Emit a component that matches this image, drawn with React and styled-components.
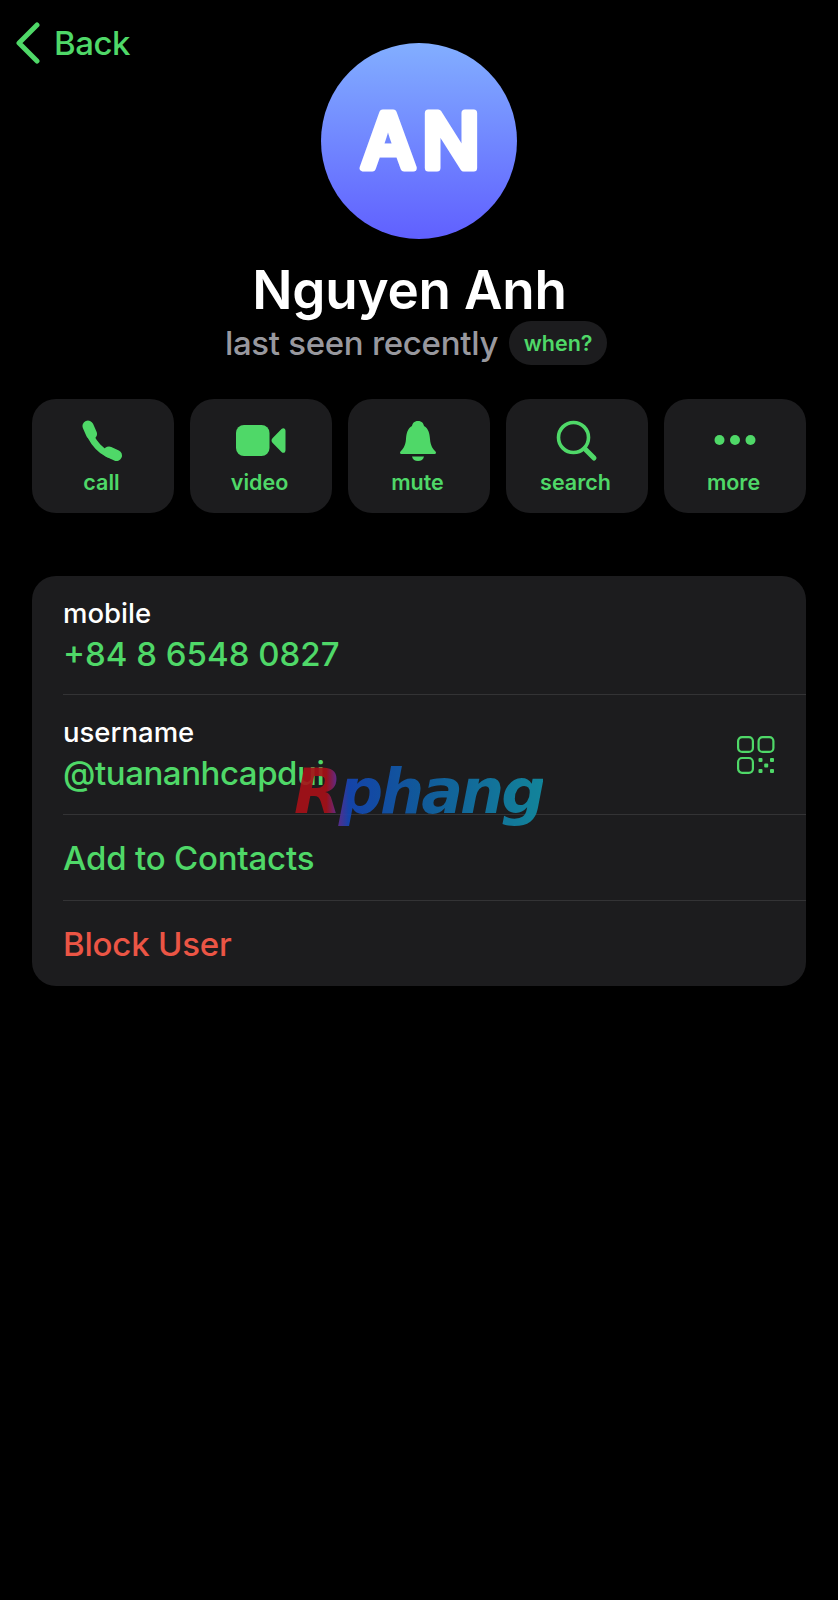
import React from 'react'
import styled, { createGlobalStyle } from 'styled-components'

const GREEN = '#4fd868'

const GlobalStyle = createGlobalStyle`
  html, body {
    margin: 0;
    background: #000;
    font-family: Inter, "Noto Sans", "Liberation Sans", sans-serif;
    -webkit-font-smoothing: antialiased;
  }
`

function PhoneIcon() {
  return (
    <svg width="44" height="44" viewBox="0 0 44 44">
      <g fill="none" stroke={GREEN} strokeLinecap="round">
        <path d="M7 8 C 9 22, 22 37, 36 37" strokeWidth="6.5" />
        <path d="M7 7 L 10.5 15" strokeWidth="11" />
        <path d="M28 33 L 35.5 36.5" strokeWidth="11" />
      </g>
    </svg>
  )
}

function VideoIcon() {
  return (
    <svg width="50" height="44" viewBox="0 0 50 44">
      <rect x="0" y="6" width="33.5" height="31" rx="8" fill={GREEN} />
      <path d="M35.5 21.5 C35.5 20.6 35.9 19.8 36.7 19 L45.5 10 C47.3 8.3 49.5 9.3 49.5 11.8 V31.2 C49.5 33.7 47.3 34.7 45.5 33 L36.7 24 C35.9 23.2 35.5 22.4 35.5 21.5 Z" fill={GREEN} />
    </svg>
  )
}

function BellIcon() {
  return (
    <svg width="44" height="44" viewBox="0 0 44 44">
      <path fill={GREEN} d="M21 2 C17 2 15.5 4.5 15 7 C10.5 9.5 9.5 14 9 20 C8.5 27 6 30 3.5 32.5 C2.5 33.8 3 35 4.5 35 H37.5 C39 35 39.5 33.8 38.5 32.5 C36 30 33.5 27 33 20 C32.5 14 31.5 9.5 27 7 C26.5 4.5 25 2 21 2 Z" />
      <path fill={GREEN} d="M15 37.5 H27 C26.5 40.5 24 42 21 42 C18 42 15.5 40.5 15 37.5 Z" />
    </svg>
  )
}

function SearchIcon() {
  return (
    <svg width="44" height="44" viewBox="0 0 44 44" fill="none" stroke={GREEN} strokeLinecap="round">
      <circle cx="18.5" cy="18.5" r="15" strokeWidth="3.6" />
      <path d="M30 30 L39 39" strokeWidth="5" />
    </svg>
  )
}

function MoreIcon() {
  return (
    <svg width="44" height="44" viewBox="0 0 44 44" fill={GREEN}>
      <circle cx="6.5" cy="21" r="5" />
      <circle cx="22" cy="21" r="5" />
      <circle cx="37.5" cy="21" r="5" />
    </svg>
  )
}

function QrIcon() {
  return (
    <svg width="38" height="38" viewBox="0 0 38 38">
      <g fill="none" stroke={GREEN} strokeWidth="2.2">
        <rect x="1.1" y="1.1" width="14.8" height="14.8" rx="4" />
        <rect x="21.6" y="1.1" width="14.8" height="14.8" rx="4" />
        <rect x="1.1" y="22" width="14.8" height="14.8" rx="4" />
      </g>
      <g fill={GREEN}>
        <rect x="21.5" y="22" width="4" height="4" rx="1" />
        <rect x="33" y="22" width="4" height="4" rx="1" />
        <rect x="27.2" y="27.5" width="4" height="4" rx="1" />
        <rect x="21.5" y="33" width="4" height="4" rx="1" />
        <rect x="33" y="33" width="4" height="4" rx="1" />
      </g>
    </svg>
  )
}

const actions = [
  { label: 'call', icon: <PhoneIcon /> },
  { label: 'video', icon: <VideoIcon /> },
  { label: 'mute', icon: <BellIcon /> },
  { label: 'search', icon: <SearchIcon /> },
  { label: 'more', icon: <MoreIcon /> },
]

export default function App() {
  return (
    <Page>
      <GlobalStyle />
      <Header>
        <BackLink>
          <svg width="24" height="42" viewBox="0 0 24 42" fill="none" stroke={GREEN} strokeWidth="5" strokeLinecap="round" strokeLinejoin="round">
            <path d="M21 3 L3 21 L21 39" />
          </svg>
          Back
        </BackLink>
        <Avatar>
          <svg width="196" height="196" viewBox="0 0 196 196">
            <Initials x="103" y="125">AN</Initials>
          </svg>
        </Avatar>
      </Header>
      <Name>Nguyen Anh</Name>
      <Status>
        <LastSeen>last seen recently</LastSeen>
        <WhenChip>when?</WhenChip>
      </Status>
      <Actions>
        {actions.map(a => (
          <ActionButton key={a.label}>
            <IconSlot>{a.icon}</IconSlot>
            <ActionLabel>{a.label}</ActionLabel>
          </ActionButton>
        ))}
      </Actions>
      <Card>
        <InfoRow>
          <Caption>mobile</Caption>
          <Value>+84 8 6548 0827</Value>
        </InfoRow>
        <InfoRow $divider>
          <Caption>username</Caption>
          <Value $tight>@tuananhcapdui</Value>
          <QrSlot><QrIcon /></QrSlot>
        </InfoRow>
        <LinkRow $divider>Add to Contacts</LinkRow>
        <LinkRow $divider $danger>Block User</LinkRow>
        <Watermark>Rphang</Watermark>
      </Card>
    </Page>
  )
}

const Page = styled.div`
  width: 838px;
  min-height: 1600px;
  box-sizing: border-box;
  padding: 23px 32px 0;
  background: #000;
  display: flex;
  flex-direction: column;
`

const Header = styled.div`
  display: grid;
  grid-template-columns: 1fr 196px 1fr;
  margin: 0 -32px;
  padding-left: 16px;
  padding-right: 16px;
`

const BackLink = styled.div`
  display: flex;
  align-items: center;
  align-self: start;
  gap: 14px;
  height: 40px;
  color: ${GREEN};
  font-size: 33px;
  font-weight: 500;
  letter-spacing: -0.5px;
`

const Avatar = styled.div`
  width: 196px;
  height: 196px;
  margin-top: 20px;
  border-radius: 50%;
  background: linear-gradient(180deg, #82aeff 0%, #6060ff 100%);
  line-height: 0;
`

const Initials = styled.text`
  fill: #fff;
  stroke: #fff;
  stroke-width: 7px;
  stroke-linejoin: round;
  text-anchor: middle;
  font-size: 76px;
  font-weight: 500;
  letter-spacing: 7px;
`

const Name = styled.h1`
  margin: 20px 0 0 -19px;
  text-align: center;
  color: #fff;
  font-size: 53px;
  line-height: 62px;
  font-weight: 600;
  letter-spacing: -0.2px;
`

const Status = styled.div`
  display: flex;
  align-items: center;
  justify-content: center;
  gap: 11px;
  margin: 0 0 0 -6px;
  height: 44px;
`

const LastSeen = styled.span`
  color: #98989e;
  font-size: 33px;
  font-weight: 500;
  letter-spacing: -0.3px;
`

const WhenChip = styled.span`
  display: flex;
  align-items: center;
  justify-content: center;
  width: 98px;
  height: 44px;
  border-radius: 22px;
  background: #1c1c1e;
  color: ${GREEN};
  font-size: 21.5px;
  font-weight: 600;
`

const Actions = styled.div`
  display: grid;
  grid-template-columns: repeat(5, 1fr);
  gap: 16px;
  margin-top: 34px;
`

const ActionButton = styled.div`
  height: 114px;
  box-sizing: border-box;
  padding-top: 20px;
  border-radius: 24px;
  background: #1c1c1e;
  display: flex;
  flex-direction: column;
  align-items: center;
  gap: 6px;
`

const IconSlot = styled.div`
  height: 44px;
  display: flex;
  justify-content: center;
`

const ActionLabel = styled.span`
  margin-right: 3px;
  color: ${GREEN};
  font-size: 21.5px;
  line-height: 26px;
  font-weight: 600;
`

const Card = styled.div`
  position: relative;
  margin-top: 63px;
  border-radius: 24px;
  background: #1c1c1e;
`

const InfoRow = styled.div`
  position: relative;
  height: ${p => (p.$divider ? '120px' : '118px')};
  box-sizing: border-box;
  margin-left: 31px;
  padding-top: 21px;
  ${p => p.$divider && 'border-top: 1px solid #333335;'}
`

const Caption = styled.div`
  color: #fff;
  font-size: 27.5px;
  line-height: 32px;
  font-weight: 500;
`

const Value = styled.div`
  margin-top: 4px;
  color: ${GREEN};
  font-size: 33px;
  line-height: 42px;
  font-weight: 500;
  letter-spacing: ${p => (p.$tight ? '-0.45px' : '0')};
`

const QrSlot = styled.div`
  position: absolute;
  right: 31px;
  top: 41px;
  line-height: 0;
`

const LinkRow = styled.div`
  height: 86px;
  box-sizing: border-box;
  margin-left: 31px;
  display: flex;
  align-items: center;
  color: ${p => (p.$danger ? '#eb5545' : GREEN)};
  font-size: 33px;
  font-weight: 500;
  letter-spacing: -0.2px;
  ${p => p.$divider && 'border-top: 1px solid #333335;'}
`

const Watermark = styled.div`
  position: absolute;
  left: 262px;
  top: 178px;
  font-family: "DejaVu Sans", sans-serif;
  font-size: 62px;
  line-height: 76px;
  font-weight: 700;
  font-style: italic;
  letter-spacing: -3px;
  background: linear-gradient(90deg, #a81018 0%, #a81018 13%, #6a2a90 17%, #1448b8 22%, #1060a8 50%, #1290a8 100%);
  -webkit-background-clip: text;
  background-clip: text;
  color: transparent;
  opacity: 0.9;
`
